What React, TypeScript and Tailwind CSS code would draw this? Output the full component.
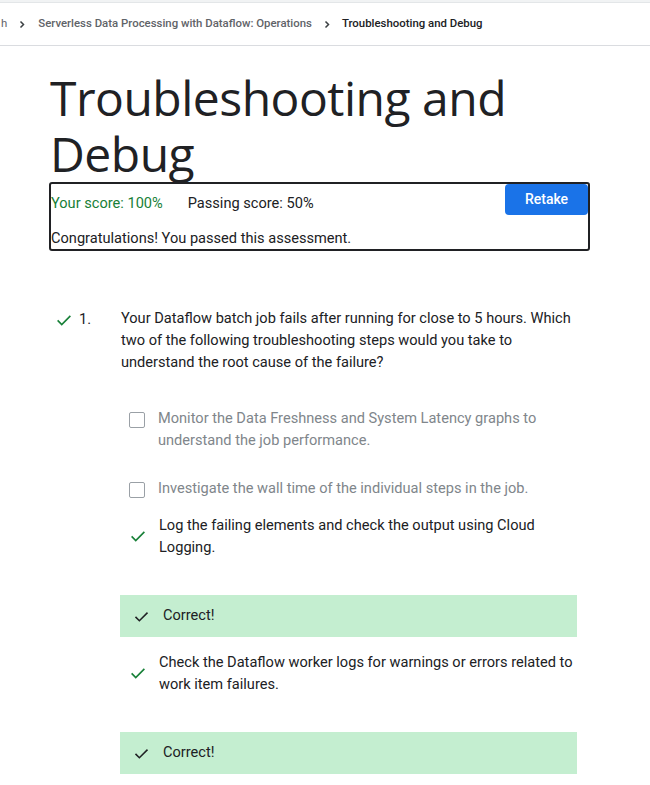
import React from 'react';

function Check({ className = '' }: { className?: string }) {
  return (
    <svg className={className} viewBox="0 0 24 24" fill="none" stroke="currentColor" strokeWidth="2.2">
      <path d="M3.5 12.5l5.5 5.5L20.5 6.5" />
    </svg>
  );
}

function Chevron() {
  return (
    <svg className="w-[8px] h-[9px] text-[#3c4043]" viewBox="0 0 20 24" fill="none" stroke="currentColor" strokeWidth="4">
      <path d="M6 4l8 8-8 8" />
    </svg>
  );
}

function Answer({ children }: { children: React.ReactNode }) {
  return (
    <div className="flex items-center">
      <div className="w-[39px] shrink-0 pl-[9px]">
        <Check className="w-[18px] h-[18px] text-[#188038]" />
      </div>
      <p className="whitespace-nowrap text-[14.6px] leading-[22px] text-[#202124]">{children}</p>
    </div>
  );
}

function Option({ text }: { text: string }) {
  return (
    <div className="flex items-start">
      <div className="w-[38px] shrink-0 pl-[9px] pt-[5px]">
        <div className="w-[16px] h-[16px] border-[1.5px] border-[#9aa0a6] rounded-[2px]" />
      </div>
      <p className="w-[419px] text-[14.6px] leading-[22px] text-[#80868b]">{text}</p>
    </div>
  );
}

function Banner() {
  return (
    <div className="w-[457px] bg-[#c4eed0] h-[42px] flex items-center pl-[13px] gap-[13px]">
      <Check className="w-[17px] h-[17px] text-[#202124]" />
      <span className="text-[14.6px] text-[#202124]">Correct!</span>
    </div>
  );
}

export default function App() {
  return (
    <div className="min-h-screen bg-white font-['Roboto',sans-serif] text-[#202124] overflow-hidden">
      <div className="h-[3px] bg-[#f1f3f4] border-b border-[#e3e6e8]" />
      <nav className="h-[43px] flex items-center gap-[11px] border-b border-[#dadce0] text-[11.4px] whitespace-nowrap">
        <span className="text-[#5f6368] ml-[1px]">h</span>
        <Chevron />
        <span className="text-[#5f6368] font-medium ml-[1px]">Serverless Data Processing with Dataflow: Operations</span>
        <Chevron />
        <span className="text-[#202124] font-medium">Troubleshooting and Debug</span>
      </nav>

      <main className="pl-[50px] pr-[30px]">
        <h1 className="mt-[24px] text-[48px] leading-[56px] text-[#202124] font-['Open_Sans',sans-serif] tracking-[-0.5px]">
          Troubleshooting and Debug
        </h1>

        <section className="-ml-[1px] w-[541px] border-2 border-[#202124] rounded-[3px] text-[14.6px] flex flex-col">
          <div className="flex items-start justify-between">
            <div className="flex gap-[25px] pt-[9px]">
              <span className="text-[#188038]">Your score: 100%</span>
              <span className="text-[#202124]">Passing score: 50%</span>
            </div>
            <button className="bg-[#1a73e8] text-white font-medium text-[14px] w-[83px] h-[31px] rounded-[4px]">
              Retake
            </button>
          </div>
          <p className="pt-[13px] pb-[1px] leading-[20px]">Congratulations! You passed this assessment.</p>
        </section>

        <div className="mt-[56px] flex items-start">
          <div className="w-[71px] shrink-0 flex items-center gap-[6px] pl-[5px] pt-[2px]">
            <Check className="w-[18px] h-[18px] text-[#188038]" />
            <span className="text-[14.6px]">1.</span>
          </div>
          <p className="text-[14.6px] leading-[22px] w-[460px]">
            Your Dataflow batch job fails after running for close to 5 hours. Which two of the following troubleshooting steps would you take to understand the root cause of the failure?
          </p>
        </div>

        <div className="ml-[70px] mt-[34px] flex flex-col">
          <Option text="Monitor the Data Freshness and System Latency graphs to understand the job performance." />
          <div className="h-[26px]" />
          <Option text="Investigate the wall time of the individual steps in the job." />
          <div className="h-[15px]" />
          <Answer>
            Log the failing elements and check the output using Cloud
            <br />
            Logging.
          </Answer>
          <div className="h-[37px]" />
          <Banner />
          <div className="h-[14px]" />
          <Answer>
            Check the Dataflow worker logs for warnings or errors related to
            <br />
            work item failures.
          </Answer>
          <div className="h-[37px]" />
          <Banner />
        </div>
      </main>
    </div>
  );
}
